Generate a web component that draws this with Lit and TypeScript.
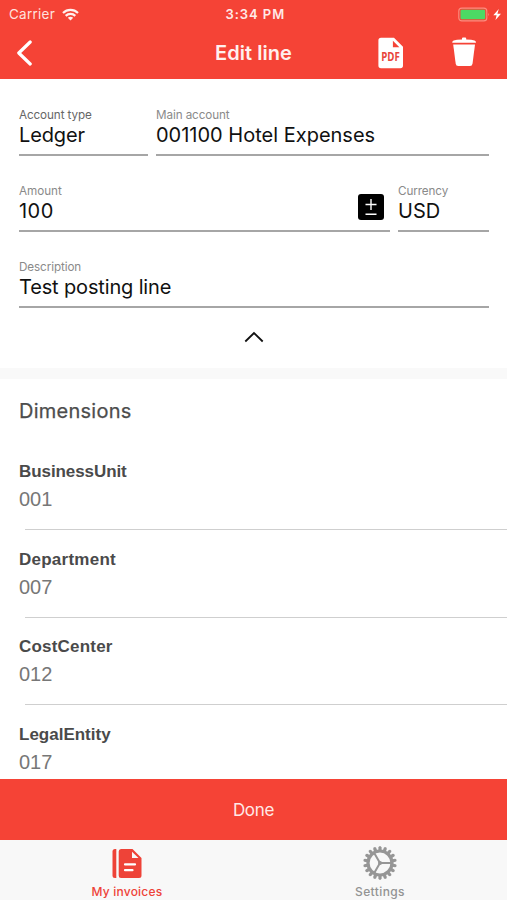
import { LitElement, html, css, svg } from "lit";
import { customElement, property } from "lit/decorators.js";

@customElement("form-field")
class FormField extends LitElement {
  @property() label = "";
  @property() value = "";
  static styles = css`
    :host { display: block; box-sizing: border-box; height: 50px; border-bottom: 2px solid #a6a6a6; position: relative; }
    .label { font: 400 11.7px/18px Inter, sans-serif; color: #8a8a8a; height: 17px; white-space: nowrap; letter-spacing: var(--ls, 0); }
    :host(.dark) .label { color: #666; }
    .value { font: 400 20px/24px Inter, sans-serif; color: #111; white-space: nowrap; letter-spacing: var(--vs, 0); }
    ::slotted(*) { position: absolute; right: 6px; top: 12px; }
  `;
  render() {
    return html`<div class="label">${this.label}</div><div class="value">${this.value}</div><slot></slot>`;
  }
}

@customElement("app-root")
class AppRoot extends LitElement {
  static styles = css`
    :host { display: flex; flex-direction: column; width: 507px; height: 900px; overflow: hidden; background: #fff; font-family: Inter, sans-serif; }
    svg { display: block; }
    header { height: 79px; background: #f54336; color: #fff; flex: none; }
    .status { height: 27px; display: grid; grid-template-columns: 1fr 60px 1fr; align-items: center; font-size: 13.5px; line-height: 27px; }
    .carrier { display: flex; align-items: center; gap: 7px; padding-left: 9px; color: #ffe1de; letter-spacing: .25px; }
    .time { font-weight: 600; font-size: 13px; white-space: nowrap; letter-spacing: .95px; color: #ffe9e7; padding-left: 2px; padding-top: 1px; }
    .power { display: flex; justify-content: flex-end; padding-right: 5px; }
    .nav { height: 51px; display: grid; grid-template-columns: 215px 163px 74px 1fr; align-items: center; }
    .back { padding-left: 16px; }
    .title { font-size: 20px; font-weight: 600; line-height: 50px; letter-spacing: .05px; color: #fff0ee; }
    .pdf { font: 700 12px "Open Sans", sans-serif; fill: #e8453a; }
    .form { height: 289px; box-sizing: border-box; padding: 27px 18px 0 19px; flex: none; }
    .row { display: grid; gap: 8px; margin-bottom: 26px; }
    .accounts { grid-template-columns: 129px 1fr; }
    .desc { --vs: -.15px; --ls: -.1px; }
    .type { --ls: -.1px; --vs: -.15px; }
    .cur { --ls: -.1px; }
    .amount { --vs: .45px; --ls: -.05px; }
    .amounts { grid-template-columns: 1fr 91px; }
    .row.last { margin-bottom: 22px; }
    .chevron { margin: 0 auto; }
    .band { height: 11px; background: #f9f9f9; flex: none; }
    .dims { flex: 1; min-height: 0; overflow: hidden; color: #4a4a4a; }
    h2 { margin: 18px 0 33px 19px; font: 400 20px/28px Inter, sans-serif; color: #4d4d4d; letter-spacing: .25px; -webkit-text-stroke: .25px #4d4d4d; }
    .dim { height: 87.6px; box-sizing: border-box; padding-left: 19px; }
    .name { padding-top: 2px; font: 700 17px/24px "Liberation Sans", sans-serif; }
    .n0 { letter-spacing: -.08px; }
    .n1 { letter-spacing: .25px; }
    .n2 { letter-spacing: .2px; }
    .code { font: 400 20px/28px "Liberation Sans", sans-serif; color: #777; padding-top: 1px; }
    .rule { height: 1px; background: #cfcfcf; margin: 16px 0 0 6px; }
    .done { height: 61px; flex: none; background: #f54336; color: #ffe9e7; text-align: center; font-size: 17px; line-height: 63px; letter-spacing: -.3px; }
    .tabs { height: 60px; flex: none; background: #f8f8f8; display: grid; grid-template-columns: 254px 252px; }
    .tab { display: flex; flex-direction: column; align-items: center; font-size: 12px; font-weight: 500; line-height: 16px; color: #939393; letter-spacing: .4px; padding-top: 6px; }
    .tab svg { margin-bottom: 4px; }
    .on { color: #ee4338; letter-spacing: .2px; }
  `;

  dims = [["BusinessUnit", "001"], ["Department", "007"], ["CostCenter", "012"], ["LegalEntity", "017"]];

  gear() {
    const teeth = Array.from({ length: 18 }, (_, i) => svg`<path d="M15.4-11V-15.6L16.2-16.7H17.8L18.6-15.6V-11z" transform="translate(17 17) rotate(${i * 20}) translate(-17 0)"/>`);
    return html`<svg width="34" height="34" viewBox="0 0 34 34" fill="#969696">
      ${teeth}
      <circle cx="17" cy="17" r="12" fill="none" stroke="#969696" stroke-width="3.2"/>
      <path d="M17 17H28.5M17 17L11.2 7M17 17L11.2 27" fill="none" stroke="#969696" stroke-width="2"/>
      <circle cx="17" cy="17" r="2"/>
    </svg>`;
  }

  render() {
    return html`
      <header>
        <div class="status">
          <div class="carrier">Carrier
            <svg width="17" height="13" viewBox="0 0 17 13" fill="none" stroke="#fff0ee" stroke-width="2.2">
              <path d="M1 5C5.2 .9 11.8 .9 16 5M3.7 7.9C6.4 5.3 10.6 5.3 13.3 7.9"/>
              <path d="M5.8 9.8Q8.5 7.6 11.2 9.8L8.5 12.5z" fill="#fff0ee" stroke="none"/>
            </svg>
          </div>
          <div class="time">3:34 PM</div>
          <div class="power">
            <svg width="44" height="15" viewBox="0 0 44 15">
              <rect x=".8" y="1.1" width="28" height="12.8" rx="3" fill="none" stroke="#fa8e80" stroke-width="1.1"/>
              <rect x="2.5" y="2.7" width="24.7" height="9.6" rx="1.4" fill="#4cd964"/>
              <path d="M30.3 5.7Q32 7.5 30.3 9.3z" fill="#fa8e80"/>
              <path d="M40.8 2L35.3 8.2H38.6L37.5 13L43 6.8H39.4z" fill="#fff"/>
            </svg>
          </div>
        </div>
        <div class="nav">
          <svg class="back" width="17" height="26" viewBox="0 0 17 26" fill="none" stroke="#fff" stroke-width="3.2" stroke-linecap="round" stroke-linejoin="round"><path d="M14.2 2L2.8 13L14.2 24"/></svg>
          <div class="title">Edit line</div>
          <svg width="26" height="32" viewBox="0 0 26 32">
            <path fill="#fff" fill-rule="evenodd" d="M3 .8H16L25 9.8V28.6Q25 31.2 22.4 31.2H3Q.4 31.2 .4 28.6V3.4Q.4 .8 3 .8zM14.9 3.8V10.2H21.4z"/>
            <text class="pdf" x="3.2" y="24.2" textLength="18.6" lengthAdjust="spacingAndGlyphs">PDF</text>
          </svg>
          <svg width="25" height="32" viewBox="0 0 25 32" fill="#fff">
            <path d="M10 2.6V1.6Q10 .6 11 .6H13.2Q14.2 .6 14.2 1.6V2.6Q20 2.7 22.5 3.6Q24 4.2 24 5.7H.2Q.2 4.2 1.7 3.6Q4.2 2.7 10 2.6z"/>
            <path d="M1.2 7.6H23L20.5 26.8Q20.2 29 18 29H6.2Q4 29 3.7 26.8z"/>
          </svg>
        </div>
      </header>
      <section class="form">
        <div class="row accounts">
          <form-field class="dark type" label="Account type" value="Ledger"></form-field>
          <form-field class="cur" label="Main account" value="001100 Hotel Expenses"></form-field>
        </div>
        <div class="row amounts">
          <form-field class="amount" label="Amount" value="100">
            <svg width="26" height="26" viewBox="0 0 26 26"><rect width="26" height="26" rx="3" fill="#000"/><path d="M13 5V16M7.5 10.5H18.5M7.5 20.3H18.5" stroke="#fff" stroke-width="1.4"/></svg>
          </form-field>
          <form-field class="cur" label="Currency" value="USD"></form-field>
        </div>
        <div class="row last"><form-field class="desc" label="Description" value="Test posting line"></form-field></div>
        <svg class="chevron" width="20" height="14" viewBox="0 0 20 14" fill="none" stroke="#111" stroke-width="1.8"><path d="M1.3 11.5L10 3L18.7 11.5"/></svg>
      </section>
      <div class="band"></div>
      <section class="dims">
        <h2>Dimensions</h2>
        ${this.dims.map(([n, c], i) => html`<div class="dim"><div class="name n${i}">${n}</div><div class="code">${c}</div><div class="rule"></div></div>`)}
      </section>
      <div class="done">Done</div>
      <nav class="tabs">
        <div class="tab on">
          <svg width="30" height="34" viewBox="0 0 30 34" fill="#ee4338">
            <path d="M4.3 3H3Q.5 3 .5 5.5V29.5Q.5 32 3 32H4.3z"/>
            <path fill-rule="evenodd" d="M9 3H20.5L29.5 12V29.5Q29.5 32 27 32H9Q6.7 32 6.7 29.5V5.5Q6.7 3 9 3zM20 5.7V12H26.5z"/>
            <path d="M13 18.4H23M13 24.2H20.5" stroke="#fff" stroke-width="2.2" stroke-linecap="round"/>
          </svg>My invoices
        </div>
        <div class="tab">${this.gear()}Settings</div>
      </nav>`;
  }
}
